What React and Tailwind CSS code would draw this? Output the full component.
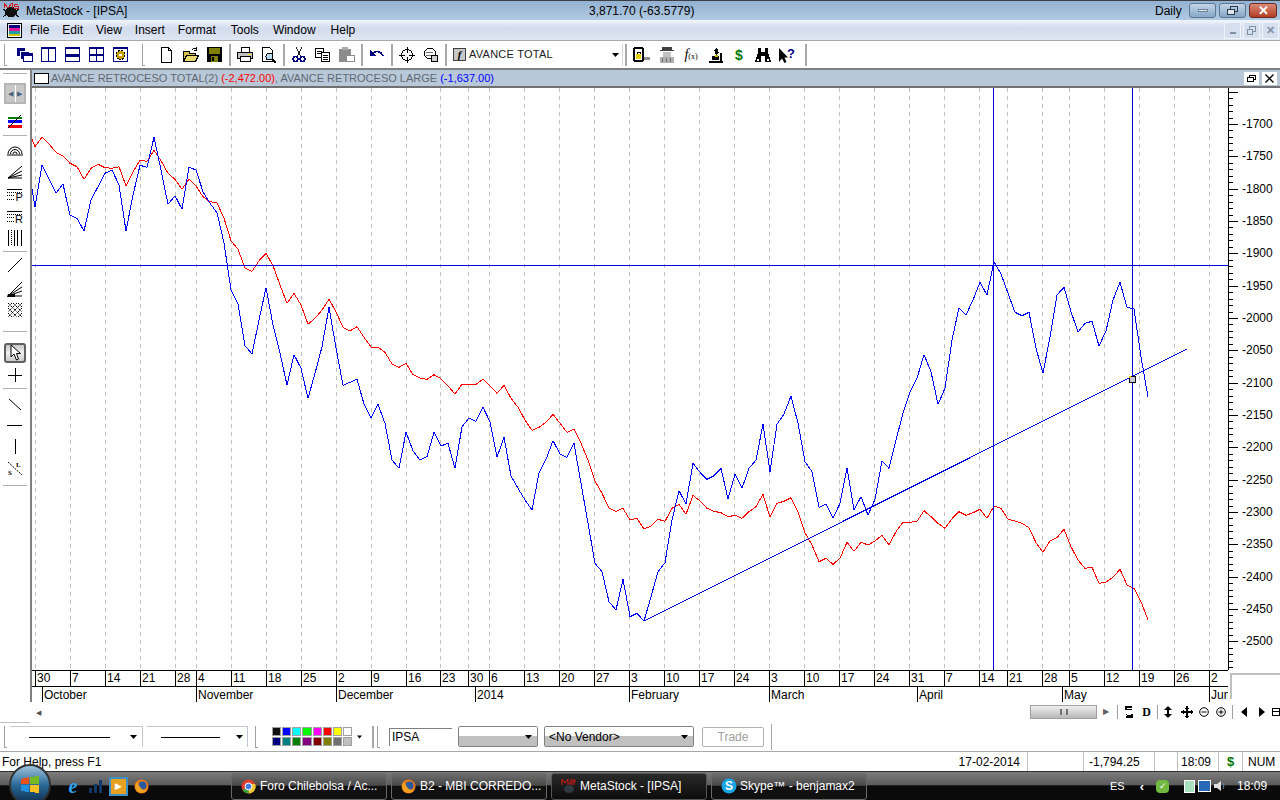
import React from 'react';

const blueY = [206.7,165.3,179.3,193.3,184,215.3,218.3,231,200,186.7,173.3,170,185,231,195,165.3,167.3,137.3,170,204.3,195.7,209.3,167.3,170,191.7,203.3,212.7,243,290,304,345.7,354,320,287.7,325,353.3,385,354.7,368.3,398.3,373.3,346.7,307.3,
  348,385.3,382.3,379.3,404,417.7,404.3,423.3,460,468.3,432.3,450.7,460,456.7,432.3,446,443.3,468.3,426.7,418,421.3,407.3,421.7,457.3,437.3,476,488.3,500,510,472.7,459.3,440.7,454,457.3,443.3,483.3,523.3,563.3,571.7,601.7,610,579.3,616.7,613.3,621,596.7,571.7,562.7,520,490.7,504,463.3,
  472.3,479.3,475.7,468.3,499,474.3,488.3,468.3,460,424.3,471.7,424.3,414,396,423.3,461.7,471.7,507.3,504.3,518.3,503.3,468.3,510,496.7,515,499.3,460.7,468.3,440,413.3,391.7,378.3,354.7,371.7,404.3,388.3,340,307.7,315,300,282.3,295,261.7,274,293.3,312.3,315.7,312.3,348.3,373.3,336.7,295,287.3,311.7,332,323.3,321.3,346,331,300,282.3,307.3,309,356.7,397];

const redY = [146.7,137.3,144,152.3,156,163.3,166.7,179.3,168.3,164.3,167.7,168.3,166.7,186,171.7,160.3,161.3,150.3,160.7,173.3,179.3,189.3,179,186,196.7,201.7,202.7,218.3,240.7,249.3,268,271.3,260.7,253.3,265.7,285,303.3,293.3,305,324.3,318.3,310,299.3,
  311.7,327.3,331,326.7,337.3,347,347.3,352.3,364,367.3,363.3,374.7,378,379.3,374.7,378.7,386,394,384.3,384.3,384.3,379.3,386,393.3,385.3,398.3,407.3,420,430.3,427.3,422.3,414.3,423.3,432.3,429.3,443.3,460,481,493.3,508.3,511.3,508.3,520,518.3,529,526,519.3,521.3,508.3,504.3,514.3,495.3,
  501,508.3,511.3,512.7,516.7,515.3,518.3,511.7,506.7,494.3,517.3,503.3,501.3,497.7,511.7,532.7,545,561.7,558.3,564.3,558.3,542.3,551.3,542.3,545,541,535.3,544.7,531.7,522.3,522.3,521.3,510.7,516.7,523.3,528.3,518.7,511.7,515.3,512.7,509.3,518.3,506,508.3,519.3,521,523.3,527.7,542.7,552,541,537.7,529.3,546.7,560,568.3,567.3,583.3,582,577.3,569.3,585,588.3,601.7,620];

const toPoints = (first, ys) => `32,${first} ` + ys.map((y, i) => `${35 + i * 7},${y}`).join(' ');

const gridX = [35,70,105,140,175,196,231,266,301,336,371,406,440,468,489,524,559,594,629,664,699,734,769,804,839,874,909,944,979,1007,1042,1069,1104,1139,1174,1209];

const dayLabels = ['30','7','14','21','28','4','11','18','25','2','9','16','23','30','6','13','20','27','3','10','17','24','3','10','17','24','31','7','14','21','28','5','12','19','26','2'];

const days = [
  { w: 3, t: '' },
  ...gridX.map((x, i) => ({ w: (gridX[i + 1] || 1228) - x, t: dayLabels[i] })),
];

const months = [
  { w: 10, t: '' }, { w: 154, t: 'October' }, { w: 140, t: 'November' }, { w: 139, t: 'December' }, { w: 154, t: '2014' },
  { w: 140, t: 'February' }, { w: 148, t: 'March' }, { w: 145, t: 'April' }, { w: 147, t: 'May' }, { w: 19, t: 'Jun' },
];

const axisLabels = ['-1700','-1750','-1800','-1850','-1900','-1950','-2000','-2050','-2100','-2150','-2200','-2250','-2300','-2350','-2400','-2450','-2500'];

const palette = ['#101010','#0000ff','#00ffff','#00ff00','#ff00ff','#ff0000','#ffff00','#ffffff','#000080','#008080','#008000','#800080','#800000','#808000','#707070','#c0c0c0'];

function Ico({ w = 16, h = 16, children, crisp = true }) {
  return (
    <svg width={w} height={h} viewBox={`0 0 ${w} ${h}`} shapeRendering={crisp ? 'crispEdges' : 'auto'} className="block shrink-0">
      {children}
    </svg>
  );
}

const Cascade = () => (
  <Ico>
    <rect x="0" y="1" width="8" height="8" fill="#000080" />
    <rect x="3" y="4" width="9" height="8" fill="#000080" stroke="#fff" />
    <rect x="6.5" y="6.5" width="9" height="8" fill="#fff" stroke="#000080" />
    <rect x="6" y="6" width="10" height="3" fill="#000080" />
  </Ico>
);
const TileV = () => (
  <Ico>
    <rect x="0.5" y="0.5" width="14" height="14" fill="#fff" stroke="#000080" />
    <rect x="0" y="0" width="15" height="2" fill="#000080" />
    <rect x="7" y="0" width="1" height="15" fill="#000080" />
  </Ico>
);
const TileH = () => (
  <Ico>
    <rect x="0.5" y="0.5" width="14" height="14" fill="#fff" stroke="#000080" />
    <rect x="0" y="0" width="15" height="2" fill="#000080" />
    <rect x="0" y="7" width="15" height="3" fill="#000080" />
  </Ico>
);
const Tile4 = () => (
  <Ico>
    <rect x="0.5" y="0.5" width="14" height="14" fill="#fff" stroke="#000080" />
    <rect x="0" y="0" width="15" height="2" fill="#000080" />
    <rect x="0" y="7" width="15" height="2" fill="#000080" />
    <rect x="7" y="0" width="1" height="15" fill="#000080" />
  </Ico>
);
const TileGear = () => (
  <Ico>
    <rect x="0.5" y="0.5" width="14" height="14" fill="#fff" stroke="#000080" />
    <rect x="0" y="0" width="15" height="2" fill="#000080" />
    <circle cx="7.5" cy="8" r="4.5" fill="#c8a000" stroke="#000" strokeDasharray="2 1" />
    <circle cx="7.5" cy="8" r="1.5" fill="#fff" />
  </Ico>
);
const NewDoc = () => (
  <Ico>
    <path d="M2.5 0.5H9.5L12.5 3.5V15.5H2.5Z" fill="#fff" stroke="#000" />
    <path d="M9.5 0.5V3.5H12.5" fill="none" stroke="#000" />
  </Ico>
);
const OpenFolder = () => (
  <Ico>
    <path d="M0.5 4.5H6.5V6.5H12.5V14.5H0.5Z" fill="#d8c050" stroke="#000" />
    <path d="M0.5 14.5L3.5 8.5H15.5L12.5 14.5Z" fill="#e8d870" stroke="#000" />
    <path d="M9 3C10 1 12 1 13.5 2.5M13.5 0V3H11" fill="none" stroke="#000" />
  </Ico>
);
const Save = () => (
  <Ico>
    <rect x="0" y="0" width="15" height="15" fill="#000" />
    <rect x="2" y="1" width="11" height="6" fill="#808000" />
    <rect x="4" y="9" width="7" height="6" fill="#808000" />
    <rect x="5" y="10" width="2" height="4" fill="#000" />
  </Ico>
);
const Printer = () => (
  <Ico w={17}>
    <path d="M4.5 0.5H12.5V5.5H4.5Z" fill="#fff" stroke="#000" />
    <rect x="0.5" y="5.5" width="15" height="6" fill="#c0c0c0" stroke="#000" />
    <rect x="3.5" y="9.5" width="10" height="5" fill="#fff" stroke="#000" />
    <rect x="11" y="7" width="3" height="1" fill="#ffe000" />
  </Ico>
);
const Preview = () => (
  <Ico>
    <path d="M1.5 0.5H8.5L11.5 3.5V14.5H1.5Z" fill="#fff" stroke="#000" />
    <circle cx="8.5" cy="9.5" r="3.5" fill="#b8d8f0" stroke="#000" />
    <path d="M11 12L15 16" stroke="#000" strokeWidth="2" />
  </Ico>
);
const Cut = () => (
  <Ico>
    <path d="M5 0L9.5 9M11 0L6.5 9" stroke="#202020" fill="none" />
    <circle cx="4.5" cy="12" r="2.5" fill="#fff" stroke="#000080" strokeWidth="1.4" />
    <circle cx="11.5" cy="12" r="2.5" fill="#fff" stroke="#000080" strokeWidth="1.4" />
  </Ico>
);
const Copy = () => (
  <Ico>
    <rect x="0.5" y="1.5" width="8" height="9" fill="#fff" stroke="#000" />
    <path d="M2 4H7M2 6H7" stroke="#000" />
    <rect x="6.5" y="5.5" width="8" height="9" fill="#fff" stroke="#000" />
    <path d="M8 8H13M8 10H13M8 12H13" stroke="#000" />
  </Ico>
);
const Paste = () => (
  <Ico>
    <rect x="0" y="2" width="12" height="13" fill="#8c8c8c" />
    <rect x="3" y="0" width="6" height="3" fill="#a8a8a8" />
    <rect x="7.5" y="8.5" width="8" height="6" fill="#fff" stroke="#8c8c8c" />
  </Ico>
);
const Undo = () => (
  <Ico>
    <path d="M3 7C7 3 12 4 14 9" fill="none" stroke="#000080" strokeWidth="1.6" />
    <path d="M1 3V9H7Z" fill="#000080" />
  </Ico>
);
const Target = () => (
  <Ico>
    <circle cx="8" cy="8" r="5.5" fill="none" stroke="#000" />
    <path d="M8 0V6M8 10V16M0 8H6M10 8H16" stroke="#000" />
  </Ico>
);
const Inspect = () => (
  <Ico>
    <circle cx="7" cy="6.5" r="5.5" fill="#fff" stroke="#000" />
    <path d="M3 5H10M3 8H10" stroke="#707070" />
    <rect x="8.5" y="8.5" width="6" height="6" fill="#d0d0d0" stroke="#000" />
  </Ico>
);
const Lock = () => (
  <Ico w={20}>
    <rect x="1" y="0" width="11" height="15" rx="3" fill="#000" />
    <rect x="3" y="2" width="7" height="11" fill="#fff" />
    <rect x="4" y="7" width="5" height="5" fill="#e8d000" />
    <path d="M5 7V5H8V7" stroke="#000" fill="none" />
    <rect x="12" y="10" width="6" height="3" fill="#909090" />
  </Ico>
);
const Spy = () => (
  <Ico w={18}>
    <rect x="4" y="0" width="10" height="3" fill="#404040" />
    <rect x="2" y="3" width="14" height="1" fill="#404040" />
    <rect x="5" y="5" width="8" height="5" fill="#c0c0c0" />
    <rect x="2" y="10" width="14" height="6" fill="#b0b0b0" />
    <path d="M4 11V15M8 11V15M12 11V15" stroke="#707070" />
  </Ico>
);
const Micro = () => (
  <Ico>
    <path d="M9 0L11 6L8 8L6 3Z" fill="#000" />
    <path d="M4 9H11V13H4Z" fill="#000" />
    <rect x="7" y="8" width="3" height="2" fill="#d0c000" />
    <rect x="1" y="14" width="14" height="2" fill="#000" />
    <rect x="12" y="6" width="2" height="8" fill="#000" />
  </Ico>
);
const Binoculars = () => (
  <Ico>
    <path d="M3 1H6V5H10V1H13V5L16 15H10V9H6V15H0L3 5Z" fill="#000" />
    <rect x="2" y="12" width="2" height="2" fill="#fff" />
    <rect x="12" y="12" width="2" height="2" fill="#fff" />
  </Ico>
);
const ArrowHelp = () => (
  <div className="flex items-start">
    <Ico w={10} crisp={false}>
      <path d="M1 1V15L4 11.5L6.5 16L8.5 15L6.5 10.5H10Z" fill="#000" />
    </Ico>
    <span className="text-[#000080] font-bold text-[13px] leading-none -ml-[1px]">?</span>
  </div>
);
const Caret = ({ w = 7 }) => (
  <svg width={w} height="4" viewBox="0 0 7 4" className="block shrink-0"><path d="M0 0H7L3.5 4Z" fill="#000" /></svg>
);

function Sep() {
  return <div className="w-[2px] h-[22px] bg-[#a8a8a8] shrink-0" />;
}
function Grip() {
  return <div className="w-[3px] h-[22px] border-l border-b border-[#a0a0a0] shrink-0" />;
}
function Tool({ children, w = 24 }) {
  return <div className="flex items-center justify-center shrink-0" style={{ width: w }}>{children}</div>;
}

function TitleBar() {
  return (
    <div className="h-[20px] flex items-center shrink-0 border-t border-[#3c4046] bg-gradient-to-b from-[#92b1d1] to-[#b1cae3] text-black whitespace-nowrap">
      <div className="w-[22px] ml-[2px] shrink-0">
        <Ico w={19} h={15}>
          <ellipse cx="9" cy="9" rx="6" ry="5" fill="#101010" />
          <path d="M1 6L5 9M17 6L13 9M1 14L5 11M17 14L13 11" stroke="#101010" />
          <path d="M2 0V5M2 0L6 5M10 0L6 5M10 0V5M12 1H16M12 1V3H16V5H12" stroke="#d01818" fill="none" />
        </Ico>
      </div>
      <span className="ml-[2px] w-[103px] shrink-0">MetaStock - [IPSA]</span>
      <span className="ml-[460px] w-[108px] shrink-0">3,871.70 (-63.5779)</span>
      <span className="ml-[458px] w-[30px] shrink-0">Daily</span>
      <div className="ml-[4px] flex gap-[3px]">
        <div className="w-[27px] h-[15px] rounded-[3px] border border-[#5e7790] bg-gradient-to-b from-[#c3d5e8] to-[#86a6c8] flex items-center justify-center">
          <div className="w-[10px] h-[3px] bg-[#e8eef4] border border-[#6b7f93]" />
        </div>
        <div className="w-[27px] h-[15px] rounded-[3px] border border-[#5e7790] bg-gradient-to-b from-[#c3d5e8] to-[#86a6c8] flex items-center justify-center">
          <Ico w={11} h={9}>
            <rect x="3.5" y="0.5" width="7" height="5" fill="none" stroke="#2c3a48" />
            <rect x="0.5" y="3.5" width="7" height="5" fill="#dfe8f0" stroke="#2c3a48" />
          </Ico>
        </div>
        <div className="w-[28px] h-[15px] rounded-[3px] border border-[#6e2a20] bg-gradient-to-b from-[#d98a76] to-[#b23a22] flex items-center justify-center text-white font-bold text-[13px] leading-none">
          ✕
        </div>
      </div>
    </div>
  );
}

function MenuBar() {
  return (
    <div className="h-[20px] flex items-center shrink-0 bg-gradient-to-b from-[#f2f5fb] via-[#d2dcee] via-40% to-[#dfe6f3]">
      <div className="ml-[7px] w-[15px] h-[15px] shrink-0 border border-black bg-white p-[1px] flex flex-col">
        <div className="h-[4px] bg-[#000080]" />
        <div className="h-[3px] bg-[#e0189c]" />
        <div className="h-[3px] bg-[#20a0a0]" />
        <div className="h-[2px] bg-[#d0c000]" />
      </div>
      <div className="ml-[8px] flex gap-[13px]">
        <span>File</span>
        <span>Edit</span>
        <span>View</span>
        <span>Insert</span>
        <span>Format</span>
        <span className="ml-[2px]">Tools</span>
        <span className="ml-[1px]">Window</span>
        <span className="ml-[2px]">Help</span>
      </div>
      <div className="ml-auto mr-[1px] flex gap-[2px]">
        <div className="w-[17px] h-[17px] border border-[#f0f4fa] bg-[#d5dfee] flex items-end justify-center pb-[4px]">
          <div className="w-[6px] h-[2px] bg-[#8292a6]" />
        </div>
        <div className="w-[17px] h-[17px] border border-[#f0f4fa] bg-[#d5dfee] flex items-center justify-center">
          <Ico w={9} h={9}>
            <rect x="2.5" y="0.5" width="6" height="5" fill="none" stroke="#8292a6" />
            <rect x="0.5" y="3.5" width="5" height="5" fill="#d5dfee" stroke="#8292a6" />
          </Ico>
        </div>
        <div className="w-[17px] h-[17px] border border-[#f0f4fa] bg-[#d5dfee] flex items-center justify-center text-[#8292a6] font-bold text-[11px] leading-none">
          ✕
        </div>
      </div>
    </div>
  );
}

function MainToolbar() {
  return (
    <div className="h-[30px] flex items-center shrink-0 bg-white border-t border-[#a8a8a8] border-b-2 border-b-[#808080] pl-[4px]">
      <Grip />
      <div className="ml-[6px] flex">
        <Tool><Cascade /></Tool><Tool><TileV /></Tool><Tool><TileH /></Tool><Tool><Tile4 /></Tool><Tool><TileGear /></Tool>
      </div>
      <div className="ml-[9px] mr-[10px]"><Grip /></div>
      <Tool><NewDoc /></Tool><Tool><OpenFolder /></Tool><Tool><Save /></Tool>
      <div className="mx-[2px]"><Sep /></div>
      <Tool><Printer /></Tool><Tool><Preview /></Tool>
      <div className="mx-[2px]"><Sep /></div>
      <Tool><Cut /></Tool><Tool><Copy /></Tool><Tool><Paste /></Tool>
      <div className="mx-[2px]"><Sep /></div>
      <Tool><Undo /></Tool>
      <div className="mx-[2px]"><Sep /></div>
      <Tool><Target /></Tool><Tool><Inspect /></Tool>
      <div className="mx-[2px]"><Sep /></div>
      <div className="ml-[4px] w-[13px] h-[13px] border border-[#404040] bg-[#c8c8c8] flex items-center justify-center shrink-0 font-['Liberation_Serif',serif] italic font-bold text-[11px] leading-none">f</div>
      <span className="ml-[3px] w-[143px] shrink-0 whitespace-nowrap text-[11px] tracking-[0.25px] text-[#202020]">AVANCE TOTAL</span>
      <Caret />
      <div className="ml-[3px] w-[1px] h-[22px] bg-[#d0d8e8]" />
      <div className="ml-[2px]"><Sep /></div>
      <div className="ml-[3px] flex">
        <Tool w={24}><Lock /></Tool>
        <Tool w={25}><Spy /></Tool>
        <Tool w={24}><span className="font-['Liberation_Serif',serif] italic text-[14px] leading-none">f<span className="text-[8px] not-italic">(x)</span></span></Tool>
        <Tool w={25}><Micro /></Tool>
        <Tool w={22}><span className="text-[#007800] font-bold text-[14px] leading-none">$</span></Tool>
        <Tool w={25}><Binoculars /></Tool>
        <Tool w={23}><ArrowHelp /></Tool>
      </div>
      <div className="ml-[7px]"><Sep /></div>
    </div>
  );
}

function SideTools() {
  const Row = ({ y, children }) => <div className="flex justify-center items-center shrink-0" style={{ height: y }}>{children}</div>;
  const Line = () => <div className="h-[1px] mx-[3px] bg-[#b0b0b0] shrink-0" />;
  return (
    <div className="w-[32px] shrink-0 border-r-2 border-[#808080] bg-white flex flex-col pt-[3px]">
      <Line />
      <div className="mt-[9px] mx-[4px] h-[21px] border-2 border-[#b4b4b4] flex gap-[1px] shrink-0">
        <div className="flex-1 bg-[#c8c8c8] flex items-center justify-center text-[#4a6080] text-[7px] leading-none">◀</div>
        <div className="flex-1 bg-[#c8c8c8] flex items-center justify-center text-[#4a6080] text-[7px] leading-none">▶</div>
      </div>
      <Row y={31}>
        <Ico>
          <rect x="1" y="5" width="14" height="2" fill="#008000" />
          <rect x="1" y="8" width="14" height="3" fill="#0000ff" />
          <rect x="1" y="13" width="14" height="3" fill="#ff0000" />
          <path d="M1 16L14 3" stroke="#000" />
        </Ico>
      </Row>
      <Line />
      <Row y={25}>
        <Ico crisp={false}>
          <path d="M1 13A7 7 0 0 1 15 13M3.5 13A4.5 4.5 0 0 1 12.5 13M6 13A2 2 0 0 1 10 13" fill="none" stroke="#000" />
          <path d="M0 14H16" stroke="#000" />
        </Ico>
      </Row>
      <Row y={22}>
        <Ico crisp={false}>
          <path d="M1 14L15 2M1 14L15 7M1 14L15 11M1 14H15" fill="none" stroke="#000" />
        </Ico>
      </Row>
      <Row y={23}>
        <Ico h={14} w={16}>
          <path d="M0 1H15" stroke="#000" />
          <path d="M0 4H15M0 7H8M0 11H8" stroke="#000" strokeDasharray="1 1" />
          <text x="8.5" y="13" fontSize="11" fill="#000" fontFamily="Liberation Sans, sans-serif">P</text>
        </Ico>
      </Row>
      <Row y={21}>
        <Ico h={14} w={16}>
          <path d="M0 1H15" stroke="#000" />
          <path d="M0 4H15M0 7H8M0 11H8" stroke="#000" strokeDasharray="1 1" />
          <text x="8" y="13" fontSize="11" fill="#000" fontFamily="Liberation Sans, sans-serif">R</text>
        </Ico>
      </Row>
      <Row y={22}>
        <Ico>
          <path d="M1.5 0V16M7.5 0V16M10.5 0V16M14.5 0V16" stroke="#000" />
          <path d="M4.5 0V16" stroke="#000" strokeDasharray="1 1" />
        </Ico>
      </Row>
      <div className="h-[2px] shrink-0" />
      <Line />
      <Row y={26}><Ico crisp={false}><path d="M1 15L15 1" stroke="#000" /></Ico></Row>
      <Row y={21}>
        <Ico crisp={false}>
          <path d="M1 15L15 1M1 15L15 6M1 15L15 10M1 15H15" fill="none" stroke="#000" />
          <path d="M1 13H8V16H0Z" fill="#000" />
        </Ico>
      </Row>
      <Row y={22}>
        <Ico crisp={false}>
          <path d="M1 1L15 15M1 6L10 15M6 1L15 10M1 11L5 15M11 1L15 5M15 1L1 15M10 1L1 10M15 6L6 15M5 1L1 5M15 11L11 15" fill="none" stroke="#000" strokeDasharray="1.4 0.7" />
        </Ico>
      </Row>
      <div className="h-[10px] shrink-0" />
      <Line />
      <div className="mt-[11px] mx-[4px] h-[20px] shrink-0 rounded-[3px] border-2 border-[#606060] bg-gradient-to-b from-[#c8c8c8] via-[#f0f0f0] to-[#c8c8c8] flex justify-center">
        <svg width="11" height="16" viewBox="0 0 11 16" className="block"><path d="M1 0V12L4 9L6.5 15L8.5 14L6.5 8.5H10.5Z" fill="#fff" stroke="#000" /></svg>
      </div>
      <Row y={24}><Ico w={14} h={14}><path d="M7 0V14M0 7H14" stroke="#000" /></Ico></Row>
      <div className="h-[1px] shrink-0" />
      <Line />
      <div className="h-[2px] shrink-0" />
      <Row y={27}><Ico crisp={false}><path d="M2 2L14 13" stroke="#000" /></Ico></Row>
      <Row y={14}><Ico h={3} w={16}><path d="M0 1H15" stroke="#000" /></Ico></Row>
      <Row y={28}><Ico w={3} h={15}><path d="M1 0V15" stroke="#000" /></Ico></Row>
      <Row y={15}>
        <Ico crisp={false}>
          <path d="M1 2L15 15" stroke="#000" strokeDasharray="2 1" />
          <text x="9" y="7" fontSize="7" fontWeight="700" fontFamily="Liberation Serif, serif">L</text>
          <text x="1" y="15" fontSize="7" fontWeight="700" fontFamily="Liberation Serif, serif">S</text>
        </Ico>
      </Row>
      <div className="h-[10px] shrink-0" />
      <Line />
    </div>
  );
}

function ChartHeader() {
  return (
    <div className="h-[18px] flex items-center shrink-0 bg-[#b8c8d8] border-b-2 border-[#707070] pl-[2px]">
      <div className="w-[15px] h-[11px] border border-black bg-white shrink-0" />
      <div className="ml-[2px] whitespace-nowrap text-[11px] text-[#5f6872]">
        AVANCE RETROCESO TOTAL(2) <span className="text-[#ff0000]">(-2,472.00)</span>, AVANCE RETROCESO LARGE <span className="text-[#0000ff]">(-1,637.00)</span>
      </div>
      <div className="ml-auto mr-[3px] flex gap-[3px]">
        <div className="w-[15px] h-[13px] bg-white flex items-center justify-center">
          <Ico w={9} h={7}>
            <rect x="2.5" y="0.5" width="6" height="4" fill="none" stroke="#000" />
            <rect x="0.5" y="2.5" width="6" height="4" fill="#fff" stroke="#000" />
          </Ico>
        </div>
        <div className="w-[15px] h-[13px] bg-white flex items-center justify-center">
          <Ico w={9} h={9} crisp={false}><path d="M0.5 0.5L8.5 8.5M8.5 0.5L0.5 8.5" stroke="#000" strokeWidth="1.3" /></Ico>
        </div>
      </div>
    </div>
  );
}

function Plot() {
  return (
    <svg width="1196" height="582" viewBox="32 88 1196 582" className="block shrink-0 bg-white">
      {gridX.map(x => (
        <path key={x} d={`M${x + 0.5} 88V670`} stroke="#c0c0c0" strokeDasharray="4 4" shapeRendering="crispEdges" />
      ))}
      <g shapeRendering="crispEdges" fill="none">
        <polyline points={toPoints(139, redY)} stroke="#ff0000" />
        <polyline points={toPoints(189, blueY)} stroke="#0000ff" />
        <path d="M644 621L1187 349" stroke="#0000e0" />
        <path d="M32 265.5H1228M993.5 88V670M1132.5 88V670" stroke="#0000e0" />
      </g>
      <rect x="1129.5" y="376.5" width="6" height="6" fill="#c8c8d8" stroke="#101010" />
      <rect x="1129" y="376" width="2" height="2" fill="#e8c000" />
    </svg>
  );
}

function Axis() {
  const ticks = [];
  for (let i = 0; i < 90; i++) {
    const y = 3.7 + i * 6.466;
    ticks.push(`M0 ${Math.round(y) + 0.5}H${i % 5 === 0 ? 9 : 4}`);
  }
  return (
    <div className="relative w-[52px] shrink-0 bg-white border-l border-black pl-[13px] pt-[20px]">
      <svg width="10" height="582" className="absolute left-0 top-0 block">
        <path d={ticks.join('')} stroke="#000" shapeRendering="crispEdges" />
      </svg>
      {axisLabels.map(l => (
        <div key={l} className="h-[32.33px] leading-[32.33px]">{l}</div>
      ))}
    </div>
  );
}

function DateScale() {
  return (
    <div className="flex shrink-0 bg-white">
      <div className="w-[1196px] shrink-0">
        <div className="h-[17px] flex border-y border-black">
          {days.map((d, i) => (
            <div key={i} style={{ width: d.w }} className={`shrink-0 leading-[15px] overflow-hidden ${i ? 'border-l border-black pl-[1px]' : ''}`}>{d.t}</div>
          ))}
        </div>
        <div className="h-[15px] flex">
          {months.map((m, i) => (
            <div key={i} style={{ width: m.w }} className={`shrink-0 leading-[16px] overflow-hidden whitespace-nowrap ${i ? 'border-l border-black pl-[1px]' : ''}`}>{m.t}</div>
          ))}
        </div>
      </div>
      <div className="ml-[2px] mt-[3px] w-[50px] h-[26px] border-t-2 border-l-2 border-[#c0c0c0]" />
    </div>
  );
}

function ScrollRow() {
  return (
    <div className="h-[20px] shrink-0 flex items-center bg-white text-black overflow-hidden">
      <div className="ml-[36px] w-[7px] shrink-0 text-[7px] leading-none text-[#505050]">◀</div>
      <div className="ml-[987px] w-[67px] h-[14px] shrink-0 border border-[#a0a0a0] bg-gradient-to-b from-[#f0f0f0] to-[#b8b8b8] flex items-center justify-center">
        <div className="w-[8px] h-[6px] border-x-2 border-[#707070]" />
      </div>
      <div className="ml-[6px] w-[8px] shrink-0 text-[8px] leading-none text-[#606060]">▶</div>
      <div className="ml-[6px] w-[1px] h-[14px] shrink-0 bg-[#a0a0a0]" />
      <Tool w={22}><Ico w={8} h={12}><path d="M1 4V1H7M7 8V11H1" stroke="#000" fill="none" strokeWidth="1.5" /><path d="M1 3H6L7 4M7 9H2L1 8" stroke="#000" fill="none" /></Ico></Tool>
      <Tool w={13}><span className="font-['Liberation_Serif',serif] font-bold text-[12px] leading-none">D</span></Tool>
      <div className="ml-[4px] w-[1px] h-[14px] shrink-0 bg-[#a0a0a0]" />
      <Tool w={20}><Ico w={8} h={12} crisp={false}><path d="M4 0L8 4H0ZM4 12L8 8H0Z" fill="#000" /><rect x="3" y="3" width="2" height="6" fill="#000" /></Ico></Tool>
      <Tool w={17}><Ico w={12} h={12}><path d="M6 0V12M0 6H12" stroke="#000" strokeWidth="1.5" /><path d="M2 4V8M10 4V8M4 2H8M4 10H8" stroke="#000" /></Ico></Tool>
      <Tool w={17}><Ico w={10} h={10} crisp={false}><circle cx="5" cy="5" r="4.3" fill="none" stroke="#000" /><path d="M2.5 5H7.5" stroke="#000" /></Ico></Tool>
      <Tool w={18}><Ico w={10} h={10} crisp={false}><circle cx="5" cy="5" r="4.3" fill="none" stroke="#000" /><path d="M2.5 5H7.5M5 2.5V7.5" stroke="#000" /></Ico></Tool>
      <div className="ml-[2px] w-[1px] h-[14px] shrink-0 bg-[#a0a0a0]" />
      <Tool w={21}><Ico w={6} h={10} crisp={false}><path d="M6 0V10L0 5Z" fill="#000" /></Ico></Tool>
      <Tool w={15}><Ico w={6} h={10} crisp={false}><path d="M0 0V10L6 5Z" fill="#000" /></Ico></Tool>
      <Tool w={14}><Ico w={8} h={8}><rect x="0.5" y="0.5" width="7" height="7" fill="none" stroke="#000" /><path d="M1 3H7" stroke="#000" /></Ico></Tool>
    </div>
  );
}

function BottomToolbar() {
  const Combo = ({ w, children }) => (
    <div style={{ width: w }} className="h-[21px] shrink-0 rounded-[2px] border border-[#808080] flex flex-col overflow-hidden relative">
      <div className="h-[9px] bg-white" />
      <div className="flex-1 bg-[#c0c0c0]" />
      <div className="absolute inset-0 flex items-center pl-[4px] pr-[5px] justify-between">
        <span className="text-[12px] leading-none">{children}</span>
        <Caret />
      </div>
    </div>
  );
  return (
    <div className="h-[30px] shrink-0 flex items-center bg-white border-b border-[#a8a8a8] pl-[4px] relative">
      <div className="absolute left-0 top-0 w-[30px] h-[1px] bg-[#c0c0c0]" />
      <Grip />
      <div className="ml-[3px] w-[133px] h-[21px] flex items-center justify-end pr-[5px] border-t border-r border-[#c0c8d8] shrink-0">
        <div className="w-[81px] h-[1px] bg-black mr-[20px]" />
        <Caret />
      </div>
      <div className="ml-[4px] w-[101px] h-[21px] flex items-center justify-end pr-[4px] border-t border-r border-[#c0c8d8] shrink-0">
        <div className="w-[59px] h-[1px] bg-black mr-[16px]" />
        <Caret />
      </div>
      <div className="ml-[7px]"><Grip /></div>
      <div className="ml-[14px] grid grid-cols-8 gap-[1px] w-[80px] shrink-0">
        {palette.map(c => (
          <div key={c} className="h-[9px] border border-[#a0a0a0]" style={{ background: c }} />
        ))}
      </div>
      <div className="ml-[5px]"><Caret w={5} /></div>
      <div className="ml-[10px]"><Sep /></div>
      <div className="ml-[3px]"><Grip /></div>
      <div className="ml-[9px] w-[63px] h-[18px] border-t border-l border-[#808080] pl-[2px] leading-[17px] shrink-0">IPSA</div>
      <div className="ml-[6px]" />
      <Combo w={80} />
      <div className="ml-[6px]" />
      <Combo w={150}>&lt;No Vendor&gt;</Combo>
      <div className="ml-[8px] w-[62px] h-[20px] rounded-[2px] border border-[#b0b0b0] text-[#a0a0a0] flex items-center justify-center shrink-0">Trade</div>
      <div className="ml-[7px] w-[1px] h-[26px] bg-[#a8a8a8]" />
    </div>
  );
}

function StatusBar() {
  const Cell = ({ w, children, className = '' }) => (
    <div style={{ width: w }} className={`shrink-0 h-full flex items-center whitespace-nowrap border-r border-[#c0c0c0] ${className}`}>{children}</div>
  );
  return (
    <div className="h-[19px] shrink-0 flex items-center bg-white">
      <div className="flex-1 pl-[2px]">For Help, press F1</div>
      <Cell w={66} className="justify-end pr-[7px]">17-02-2014</Cell>
      <Cell w={56} />
      <Cell w={71} className="pl-[5px]">-1,794.25</Cell>
      <Cell w={23} />
      <Cell w={41} className="pl-[3px]">18:09</Cell>
      <Cell w={24} className="justify-center text-[#007800] font-bold text-[13px]">$</Cell>
      <div className="w-[37px] pl-[5px]">NUM</div>
    </div>
  );
}

function TaskButton({ active, icon, children, ml = 0 }) {
  return (
    <div style={{ marginLeft: ml }} className={`w-[156px] h-[27px] shrink-0 rounded-[3px] border flex items-center pl-[9px] text-white whitespace-nowrap overflow-hidden ${active ? 'border-[#555] bg-gradient-to-b from-[#2a2a2a] to-[#0c0c0c]' : 'border-[#6a6a6a] bg-gradient-to-b from-[#6c6c6c] via-[#4a4a4a] via-45% to-[#101010] to-50%'}`}>
      <div className="w-[15px] shrink-0">{icon}</div>
      <span className="ml-[4px]">{children}</span>
    </div>
  );
}

const ChromeIco = () => (
  <Ico w={15} h={15} crisp={false}>
    <circle cx="7.5" cy="7.5" r="7" fill="#e04030" />
    <path d="M7.5 7.5L1.5 11A7 7 0 0 0 7.5 14.5L11 8Z" fill="#40a040" />
    <path d="M7.5 7.5L8 14.5A7 7 0 0 0 14.2 5H7.5Z" fill="#f0c830" />
    <circle cx="7.5" cy="7.5" r="3.4" fill="#4080e0" stroke="#fff" />
  </Ico>
);
const FoxIco = ({ s = 15 }) => (
  <svg width={s} height={s} viewBox="0 0 15 15" className="block shrink-0">
    <circle cx="7.5" cy="7.5" r="7" fill="#e87a18" />
    <circle cx="8.5" cy="6.5" r="4" fill="#2c5a9c" />
    <path d="M3 3C5 6 6 9 9 11C11 12 13 11 14 9C13 14 6 16 2 11C1 8 1 5 3 3Z" fill="#f2a020" />
  </svg>
);
const MsIco = () => (
  <Ico w={17} h={15} crisp={false}>
    <ellipse cx="8" cy="10" rx="5" ry="4" fill="#303840" />
    <path d="M1 6V0L4 4L7 0V6M9 1H14V3H9V5H14" stroke="#e01818" fill="none" />
  </Ico>
);
const SkypeIco = () => (
  <svg width="16" height="16" viewBox="0 0 16 16" className="block shrink-0">
    <circle cx="8" cy="8" r="7.5" fill="#18a4e0" />
    <text x="8" y="12" textAnchor="middle" fontSize="12" fontWeight="700" fill="#fff" fontFamily="Liberation Sans, sans-serif">S</text>
  </svg>
);

function Taskbar() {
  return (
    <div className="relative h-[29px] shrink-0 border-t border-[#303030] flex items-center bg-gradient-to-b from-[#7c7c7c] via-[#5c5c5c] via-45% to-[#0a0a0a] to-50% text-white">
      <div className="absolute left-[9px] -top-[8px] w-[42px] h-[42px] rounded-full border-2 border-[#303030] bg-gradient-to-b from-[#9dc3dc] via-[#2a6a98] to-[#0c2c4c] flex items-center justify-center">
        <Ico w={20} h={18}>
          <path d="M1 3L9 1V8H1Z" fill="#e8501c" />
          <path d="M10 1L19 0V8H10Z" fill="#78b820" />
          <path d="M1 9H9V16L1 15Z" fill="#2090e0" />
          <path d="M10 9H19V17L10 16Z" fill="#f8c020" />
        </Ico>
      </div>
      <div className="ml-[65px] w-[85px] shrink-0 flex items-center">
        <span className="w-[16px] text-center text-[#30a0f0] font-bold italic text-[20px] leading-none font-['Liberation_Serif',serif]">e</span>
        <div className="ml-[8px]">
          <Ico w={14} h={14}>
            <rect x="0" y="9" width="3" height="5" fill="#103868" />
            <rect x="5" y="5" width="3" height="9" fill="#103868" />
            <rect x="10" y="1" width="3" height="13" fill="#103868" />
          </Ico>
        </div>
        <div className="ml-[6px] w-[19px] h-[19px] border-2 border-[#4090c8] bg-[#e8a020] flex items-center justify-center text-white text-[9px] leading-none">▶</div>
        <div className="ml-[6px]"><FoxIco /></div>
      </div>
      <div className="ml-[81px] flex">
        <TaskButton icon={<ChromeIco />}>Foro Chilebolsa / Ac...</TaskButton>
        <TaskButton ml={4} icon={<FoxIco />}>B2 - MBI CORREDO...</TaskButton>
        <TaskButton ml={4} active icon={<MsIco />}>MetaStock - [IPSA]</TaskButton>
        <TaskButton ml={4} icon={<SkypeIco />}>Skype™ - benjamax2</TaskButton>
      </div>
      <span className="ml-[243px] text-[11px]">ES</span>
      <span className="ml-[15px] text-[13px] font-bold leading-none">‹</span>
      <div className="ml-[12px] w-[13px] h-[13px] rounded-[4px] bg-[#70b840] flex items-center justify-center text-[9px] leading-none">✓</div>
      <div className="ml-[15px] flex items-center gap-[3px]">
        <div className="w-[11px] h-[13px] bg-[#a8e0c0] border border-white" />
        <div className="w-[13px] h-[12px] bg-[#2868b8] border border-white" />
        <Ico w={11} h={12} crisp={false}><path d="M0 4H3L7 1V11L3 8H0Z" fill="#e0e0e0" /><path d="M9 3C10 5 10 7 9 9" stroke="#6090c0" fill="none" /></Ico>
      </div>
      <span className="ml-[12px] text-[12px]">18:09</span>
    </div>
  );
}

export default function App() {
  return (
    <div className="w-[1280px] h-[800px] overflow-hidden flex flex-col bg-white text-black text-[12px] leading-none font-['Liberation_Sans',sans-serif]">
      <TitleBar />
      <MenuBar />
      <MainToolbar />
      <div className="h-[632px] shrink-0 flex">
        <SideTools />
        <div className="w-[1248px] flex flex-col">
          <ChartHeader />
          <div className="h-[582px] flex shrink-0">
            <Plot />
            <Axis />
          </div>
          <DateScale />
        </div>
      </div>
      <ScrollRow />
      <BottomToolbar />
      <StatusBar />
      <Taskbar />
    </div>
  );
}
